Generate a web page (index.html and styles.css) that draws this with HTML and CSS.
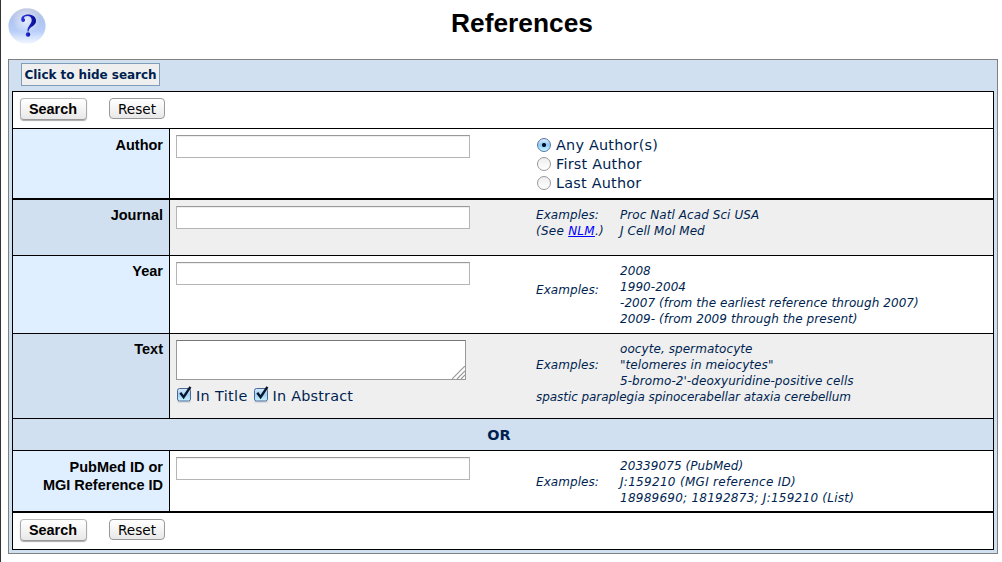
FILE: index.html
```html
<!DOCTYPE html>
<html lang="en">
<head>
<meta charset="utf-8">
<title>References</title>
<link rel="stylesheet" href="styles.css">
</head>
<body>
<header class="header">
  <svg class="help" width="38" height="36" viewBox="0 0 38 36" role="img" aria-label="Help">
    <defs>
      <linearGradient id="orb" x1="0" y1="0" x2="0" y2="1">
        <stop offset="0" stop-color="#c5cde2"/><stop offset=".35" stop-color="#afc4ef"/><stop offset=".65" stop-color="#b9cffa"/><stop offset="1" stop-color="#f3f8ff"/>
      </linearGradient>
      <radialGradient id="shine"><stop offset="0" stop-color="#fff" stop-opacity=".7"/><stop offset="1" stop-color="#fff" stop-opacity="0"/></radialGradient>
      <linearGradient id="mark" x1="0" y1="0" x2="1" y2="0"><stop offset="0" stop-color="#2b35e8"/><stop offset="1" stop-color="#0b0d90"/></linearGradient>
    </defs>
    <ellipse cx="19" cy="18" rx="18.6" ry="17.8" fill="url(#orb)"/>
    <ellipse cx="18" cy="13" rx="14" ry="12" fill="url(#shine)"/>
    <path d="M13.3 12.6C12.5 8.8 15.8 6.5 20 6.5C24.8 6.5 28 8.9 28 12.7C28 16 25.6 17.5 23.4 19.1C21.5 20.5 20.8 21.4 20.6 23.4H19.5C19.2 20.9 20.2 19.3 21.5 17.3C22.7 15.5 23.7 14.2 23.7 12C23.7 9.5 22 7.9 19.4 7.9C17.4 7.9 16 8.8 16 9.7C16 10.6 17.2 10.7 17.1 12.1C17 13.4 16.2 14.1 15.1 14.1C14.1 14.1 13.5 13.5 13.3 12.6Z" fill="url(#mark)"/>
    <circle cx="20" cy="26.5" r="2.2" fill="url(#mark)"/>
  </svg>
  <h1 class="title">References</h1>
</header>
<main class="frame">
  <div class="toggle-row"><span class="toggle">Click to hide search</span></div>
  <form class="query">
    <div class="actions"><button class="btn search" type="button">Search</button><button class="btn reset" type="button">Reset</button></div>
    <section class="row author">
      <div class="label">Author</div>
      <div class="cell"><input class="field" type="text"><div class="radios">
        <div class="choice"><span class="radio on"></span>Any Author(s)</div>
        <div class="choice"><span class="radio"></span>First Author</div>
        <div class="choice"><span class="radio"></span>Last Author</div>
      </div></div>
    </section>
    <section class="row journal shade">
      <div class="label">Journal</div>
      <div class="cell"><input class="field" type="text"><div class="examples">
        <div class="key">Examples:<br><span class="see">(See <a href="#">NLM</a>.)</span></div><div>Proc Natl Acad Sci USA<br>J Cell Mol Med</div>
      </div></div>
    </section>
    <section class="row year">
      <div class="label">Year</div>
      <div class="cell"><input class="field" type="text"><div class="examples">
        <div class="key middle">Examples:</div><div>2008<br>1990-2004<br>-2007 (from the earliest reference through 2007)<br>2009- (from 2009 through the present)</div>
      </div></div>
    </section>
    <section class="row text shade">
      <div class="label">Text</div>
      <div class="cell"><div class="text-entry">
        <div class="area"><svg class="grip" width="13" height="13" viewBox="0 0 13 13"><path d="M0 13L13 0M5 13L13 5M9 13L13 9" stroke="#999" stroke-width="1.2"/></svg></div>
        <div class="checks">
          <svg class="check" width="16" height="17" viewBox="0 0 16 17"><use href="#checked"/></svg><span class="in-title">In Title</span>
          <svg class="check" width="16" height="17" viewBox="0 0 16 17"><use href="#checked"/></svg><span class="in-abstract">In Abstract</span>
        </div>
      </div><div class="examples">
        <div class="key middle">Examples:</div><div>oocyte, spermatocyte<br>"telomeres in meiocytes"<br>5-bromo-2'-deoxyuridine-positive cells</div>
        <div class="wide">spastic paraplegia spinocerabellar ataxia cerebellum</div>
      </div></div>
    </section>
    <div class="or">OR</div>
    <section class="row ids">
      <div class="label">PubMed ID or<br>MGI Reference ID</div>
      <div class="cell"><input class="field" type="text"><div class="examples">
        <div class="key middle">Examples:</div><div>20339075 (PubMed)<br><span class="accession">J:159210 (MGI reference ID)</span><br><span class="accession-list">18989690; 18192873; J:159210 (List)</span></div>
      </div></div>
    </section>
    <div class="actions"><button class="btn search" type="button">Search</button><button class="btn reset" type="button">Reset</button></div>
  </form>
</main>
<svg class="symbols" width="0" height="0"><defs>
  <linearGradient id="box" x1="0" y1="0" x2="0" y2="1"><stop offset="0" stop-color="#d9ecfb"/><stop offset=".48" stop-color="#9fd0f5"/><stop offset="1" stop-color="#c9f3ff"/></linearGradient>
  <g id="checked"><rect x="1.5" y="2.5" width="13" height="12.5" rx="2" fill="url(#box)" stroke="#4c6796"/><path d="M1.5 15.9H14.5" stroke="#9aa7b8" stroke-width=".7"/><path d="M4.3 6.8L7.6 11.2L14.4 .8" fill="none" stroke="#09152c" stroke-width="2.4"/></g>
</defs></svg>
</body>
</html>
```
FILE: styles.css
```css
* { box-sizing: border-box; }
body {
  margin: 0;
  height: 562px;
  overflow: hidden;
  border-left: 1px solid #333;
  background: #fff;
  color: #001f51;
  font-family: Verdana, "DejaVu Sans", sans-serif;
  font-size: 14.4px;
}
.header { display: grid; grid-template-columns: 38px 1fr; height: 59px; padding: 8px 4px 0 7px; }
.title {
  margin: 0 45px 0 45px;
  color: #000;
  font: bold 26.3px/30px "Liberation Sans", Arial, sans-serif;
  text-align: center;
}
.frame {
  width: 990px;
  height: 495px;
  margin-left: 7px;
  padding: 0 3px;
  border: 1px solid #808080;
  background: #d0e0f0;
}
.toggle-row { height: 31px; padding: 3px 0 0 9px; }
.toggle {
  display: block;
  width: 139px;
  height: 23px;
  border: 1px solid #7f9db9;
  background: #efefef;
  font-size: 12px;
  font-weight: bold;
  letter-spacing: -.05px;
  line-height: 23px;
  text-align: center;
  white-space: nowrap;
}
.query { width: 982px; border: 1px solid #000; background: #fff; }
.actions { display: flex; align-items: flex-start; gap: 22px; height: 36px; padding: 6px 0 0 7px; }
.btn {
  padding: 0;
  border: 1px solid #999;
  border-radius: 4px;
  background: linear-gradient(#fff, #f4f4f4 50%, #e8e8e8);
  box-shadow: 0 1px 1px #aaa;
  color: #000;
}
.search { width: 67px; height: 22px; padding-right: 1px; border-color: #bbb #aaa #999; font: bold 14.4px/18px "Liberation Sans", Arial, sans-serif; }
.reset { width: 56px; height: 21px; padding-top: 1px; font: 13.6px/18px Verdana, "DejaVu Sans", sans-serif; box-shadow: none; }
.row { display: grid; grid-template-columns: 157px 1fr; border-top: 1px solid #000; }
.label {
  padding: 6px 6px 0 0;
  border-right: 1px solid #000;
  background: #dfefff;
  color: #000;
  font: bold 14.5px/18px "Liberation Sans", Arial, sans-serif;
  text-align: right;
}
.author .label, .ids .label { padding-top: 7px; }
.shade .label { background: #d0e0f0; }
.shade { background: #efefef; }
.cell { display: grid; grid-template-columns: 360px 1fr; align-items: start; padding: 6px 0 0 6px; }
.field { width: 294px; height: 23px; border: 1px solid #b5b5b5; border-top-color: #999; background: #fff; box-shadow: inset 0 1px 1px #eee; outline: none; }
.author { height: 70px; }
.journal { height: 57px; border-top-width: 2px; }
.year { height: 78px; }
.text { height: 85px; }
.ids { height: 61px; }
.radios { padding-left: 1px; letter-spacing: .22px; }
.choice { display: flex; align-items: center; height: 19px; gap: 5px; white-space: nowrap; }
.radio { width: 14px; height: 14px; border: 1px solid #999; border-radius: 50%; background: linear-gradient(#eee, #fff); }
.radio.on { border-color: #5577a5; background: radial-gradient(circle at center, #001532 0 1.8px, transparent 2.4px), linear-gradient(#dcecfa, #8fc8f4 50%, #c5f4ff); }
.examples { display: grid; grid-template-columns: 84px 1fr; font-size: 12px; font-style: italic; letter-spacing: .07px; line-height: 16px; white-space: nowrap; padding-top: 1px; }
.key.middle { align-self: center; }
.year .key.middle { padding-bottom: 10px; }
.see { letter-spacing: .25px; }
.wide { grid-column: 1 / -1; letter-spacing: -.06px; }
.accession { letter-spacing: .3px; }
.accession-list { letter-spacing: .25px; }
a { color: #00f; }
.area { display: flex; align-items: flex-end; justify-content: flex-end; width: 290px; height: 40px; border: 1px solid #999; border-top-color: #777; background: #fff; }
.checks { display: flex; align-items: center; height: 30px; padding-top: 1px; white-space: nowrap; }
.check { margin: -2px 4px 0 0; }
.in-title { margin-right: 5px; letter-spacing: .35px; }
.in-abstract { letter-spacing: .2px; }
.or { height: 32px; padding-right: 8px; border-top: 1px solid #000; background: #d0e0f0; font-weight: bold; line-height: 32px; text-align: center; }
.ids + .actions { height: 38px; border-top: 2px solid #000; }
.symbols { display: block; }
```
